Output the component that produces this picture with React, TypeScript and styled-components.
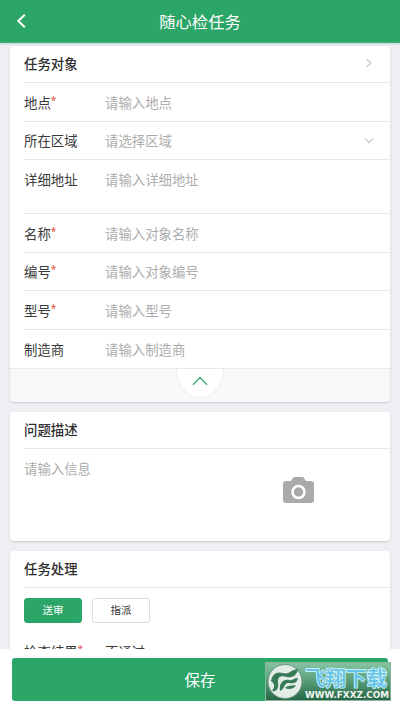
import React from "react";
import styled, { createGlobalStyle } from "styled-components";

const GlobalStyle = createGlobalStyle`
  * { box-sizing: border-box; }
  body {
    margin: 0;
    background: #eeeef3;
    font-family: "Noto Sans CJK SC", "Noto Sans", sans-serif;
    color: #3a3a3a;
  }
`;

const Screen = styled.div`
  width: 400px;
  height: 711px;
  display: flex;
  flex-direction: column;
  overflow: hidden;
  background: #eeeef3;
`;

const Header = styled.header`
  flex: none;
  height: 43px;
  display: grid;
  grid-template-columns: 44px 1fr 44px;
  align-items: center;
  background: #2ca568;
  border-bottom: 1px solid #4aab7b;
  box-shadow: 0 1px 2px rgba(44, 165, 104, 0.28);
  z-index: 1;
`;

const BackButton = styled.button`
  height: 42px;
  padding: 0 0 0 16px;
  border: 0;
  background: none;
  display: flex;
  align-items: center;
`;

const Title = styled.h1`
  margin: 0;
  text-align: center;
  font-size: 16.3px;
  font-weight: 400;
  line-height: 42px;
  color: #fff;
`;

const Content = styled.main`
  flex: 1;
  min-height: 0;
  overflow: hidden;
  padding: 3px 10px 0;
  display: flex;
  flex-direction: column;
  gap: 10px;
`;

const Card = styled.section<{ $height: number }>`
  flex: none;
  height: ${(p) => p.$height}px;
  background: #fff;
  border-radius: 4px;
  box-shadow: 0 1px 2px rgba(0, 0, 0, 0.16);
  overflow: hidden;
`;

const CardTitle = styled.h2`
  margin: 0 0 0 14px;
  height: 37px;
  padding: 0 16px 2px 0;
  display: flex;
  align-items: center;
  justify-content: space-between;
  font-size: 13.4px;
  line-height: 20px;
  font-weight: 500;
  color: #2e2e2e;
  border-bottom: 1px solid #e8e8e8;
`;

const Row = styled.label<{ $height: number; $last?: boolean }>`
  margin-left: 14px;
  padding-right: 16px;
  height: ${(p) => p.$height}px;
  display: grid;
  grid-template-columns: 81px 1fr auto;
  grid-template-rows: ${(p) => (p.$height === 38 && !p.$last ? 36 : 38)}px;
  align-items: center;
  font-size: 13.4px;
  line-height: 20px;
  border-bottom: ${(p) => (p.$last ? "0" : "1px solid #e8e8e8")};
`;

const Label = styled.span`
  display: flex;
  height: 20px;
`;

const Required = styled.span`
  color: #e2503c;
  font-family: "Noto Sans", sans-serif;
  font-size: 10px;
  line-height: 17px;
`;

const Placeholder = styled.span`
  color: #adadad;
`;

const CollapseBar = styled.div`
  height: 34px;
  display: flex;
  justify-content: center;
  align-items: flex-start;
  background: #f8f8f8;
  border-top: 1px solid #e9e9e9;
`;

const CollapseButton = styled.button`
  width: 48px;
  height: 29px;
  padding: 0 0 4px;
  display: flex;
  justify-content: center;
  align-items: center;
  background: #fff;
  border: 1px solid #eee;
  border-top: 0;
  border-radius: 0 0 24px 24px / 0 0 28px 28px;
`;

const Description = styled.div`
  padding: 9px 76px 0 14px;
  display: flex;
  justify-content: space-between;
  font-size: 13.4px;
  line-height: 20px;
`;

const CameraIcon = styled.svg`
  margin-top: 19px;
`;

const Tabs = styled.div`
  padding: 10px 14px 0;
  display: flex;
  gap: 10px;
  margin-bottom: 9px;
`;

const Tab = styled.button<{ $active?: boolean }>`
  width: 58px;
  height: 25px;
  padding: 0 0 2px;
  border-radius: 3px;
  border: 1px solid ${(p) => (p.$active ? "#2ca568" : "#dedede")};
  background: ${(p) => (p.$active ? "#2ca568" : "#fff")};
  color: ${(p) => (p.$active ? "#fff" : "#333")};
  font-family: inherit;
  font-size: 10.5px;
  line-height: 20px;
`;

const ActionBar = styled.footer`
  flex: none;
  position: relative;
  height: 62px;
  padding: 9px 12px 10px;
  background: #fff;
`;

const SaveButton = styled.button`
  width: 100%;
  height: 43px;
  padding: 0;
  border: 0;
  border-radius: 3px;
  background: #2ca568;
  color: #fff;
  font-family: inherit;
  font-size: 15.5px;
  line-height: 43px;
`;

const Watermark = styled.div`
  position: absolute;
  left: 265px;
  top: 13px;
  width: 126px;
  height: 39px;
  display: grid;
  grid-template-columns: 39px 1fr;
  background: linear-gradient(180deg, #86c3a2 0%, #5ba17c 45%, #286746 100%);
  border: 1px solid #8cb59d;
`;

const WatermarkSvg = styled.svg`
  display: block;
  overflow: visible;
`;

const WatermarkName = styled.text`
  font: 500 20.5px "Noto Sans CJK SC", sans-serif;
  fill: #62c2e8;
  stroke: #c9f0f7;
  stroke-width: 1.8px;
  paint-order: stroke;
`;

const WatermarkSite = styled.text`
  font: 700 8px "DejaVu Sans", sans-serif;
  fill: #f1f5f2;
`;

const Chevron = ({ d, w, h, color = "#c8c8c8", stroke = 1.2 }: {
  d: string; w: number; h: number; color?: string; stroke?: number;
}) => (
  <svg width={w} height={h} viewBox={`0 0 ${w} ${h}`} fill="none" stroke={color} strokeWidth={stroke}>
    <path d={d} />
  </svg>
);

type Field = { label: string; hint: string; required?: boolean; select?: boolean; height: number };

const fields: Field[] = [
  { label: "地点", hint: "请输入地点", required: true, height: 39 },
  { label: "所在区域", hint: "请选择区域", select: true, height: 38 },
  { label: "详细地址", hint: "请输入详细地址", height: 54 },
  { label: "名称", hint: "请输入对象名称", required: true, height: 39 },
  { label: "编号", hint: "请输入对象编号", required: true, height: 38 },
  { label: "型号", hint: "请输入型号", required: true, height: 39 },
  { label: "制造商", hint: "请输入制造商", height: 38 },
];

export default function App() {
  return (
    <Screen>
      <GlobalStyle />
      <Header>
        <BackButton aria-label="返回">
          <Chevron w={11} h={16} d="M8.8 1.7 2.3 8l6.5 6.3" color="#fff" stroke={2} />
        </BackButton>
        <Title>随心检任务</Title>
      </Header>
      <Content>
        <Card $height={356}>
          <CardTitle>
            任务对象
            <Chevron w={10} h={12} d="M2.5 2 7 6l-4.5 4" />
          </CardTitle>
          {fields.map((f, i) => (
            <Row key={f.label} $height={f.height} $last={i === fields.length - 1}>
              <Label>
                {f.label}
                {f.required && <Required>*</Required>}
              </Label>
              <Placeholder>{f.hint}</Placeholder>
              {f.select && <Chevron w={10} h={12} d="M1 4.500 5 8.700l4-4.200" />}
            </Row>
          ))}
          <CollapseBar>
            <CollapseButton aria-label="收起">
              <Chevron w={16} h={10} d="M1 8.7 8 1.5l7 7.2" color="#42a777" stroke={1.4} />
            </CollapseButton>
          </CollapseBar>
        </Card>
        <Card $height={129}>
          <CardTitle>问题描述</CardTitle>
          <Description>
            <Placeholder>请输入信息</Placeholder>
            <CameraIcon width="31" height="27" viewBox="0 0 31 27">
              <path fill="#aaa" d="M3 4h5l2-3q.5-1 2-1h7q1.500 0 2 1l2 3h5q3 0 3 3v16q0 3-3 3H3q-3 0-3-3V7q0-3 3-3Z" />
              <circle cx="15.500" cy="15" r="6" fill="#aaa" stroke="#fff" strokeWidth="2.500" />
            </CameraIcon>
          </Description>
        </Card>
        <Card $height={140}>
          <CardTitle>任务处理</CardTitle>
          <Tabs>
            <Tab $active>送审</Tab>
            <Tab>指派</Tab>
          </Tabs>
          <Row $height={39} $last>
            <Label>
              检查结果
              <Required>*</Required>
            </Label>
            <span>不通过</span>
          </Row>
        </Card>
      </Content>
      <ActionBar>
        <SaveButton>保存</SaveButton>
        <Watermark>
          <WatermarkSvg width="39" height="37" viewBox="0 0 39 37">
            <circle cx="19" cy="18.500" r="17" fill="#e3ece7" stroke="#6b9780" />
            <path fill="#387b59" d="M5 18C6 11 11 8 17 10c6 2 7-3 15-4-1 6-5 9-11 8-7-2-9 0-9 5 1 6-1 10-6 9 3-4 3-7-1-10Z" />
            <path fill="#387b59" d="M14 28c-1-8 3-12 9-11 4 1 5-2 9-2-1 5-5 6-9 5-5-1-4 6-9 8Zm5-3c3-3 7-2 11-3-2 4-7 5-11 3Z" />
          </WatermarkSvg>
          <WatermarkSvg width="85" height="37" viewBox="0 0 85 37">
            <WatermarkName x="0" y="22.500" textLength="82">飞翔下载</WatermarkName>
            <WatermarkSite x="0" y="34.500" textLength="84" lengthAdjust="spacingAndGlyphs">WWW.FXXZ.COM</WatermarkSite>
          </WatermarkSvg>
        </Watermark>
      </ActionBar>
    </Screen>
  );
}
